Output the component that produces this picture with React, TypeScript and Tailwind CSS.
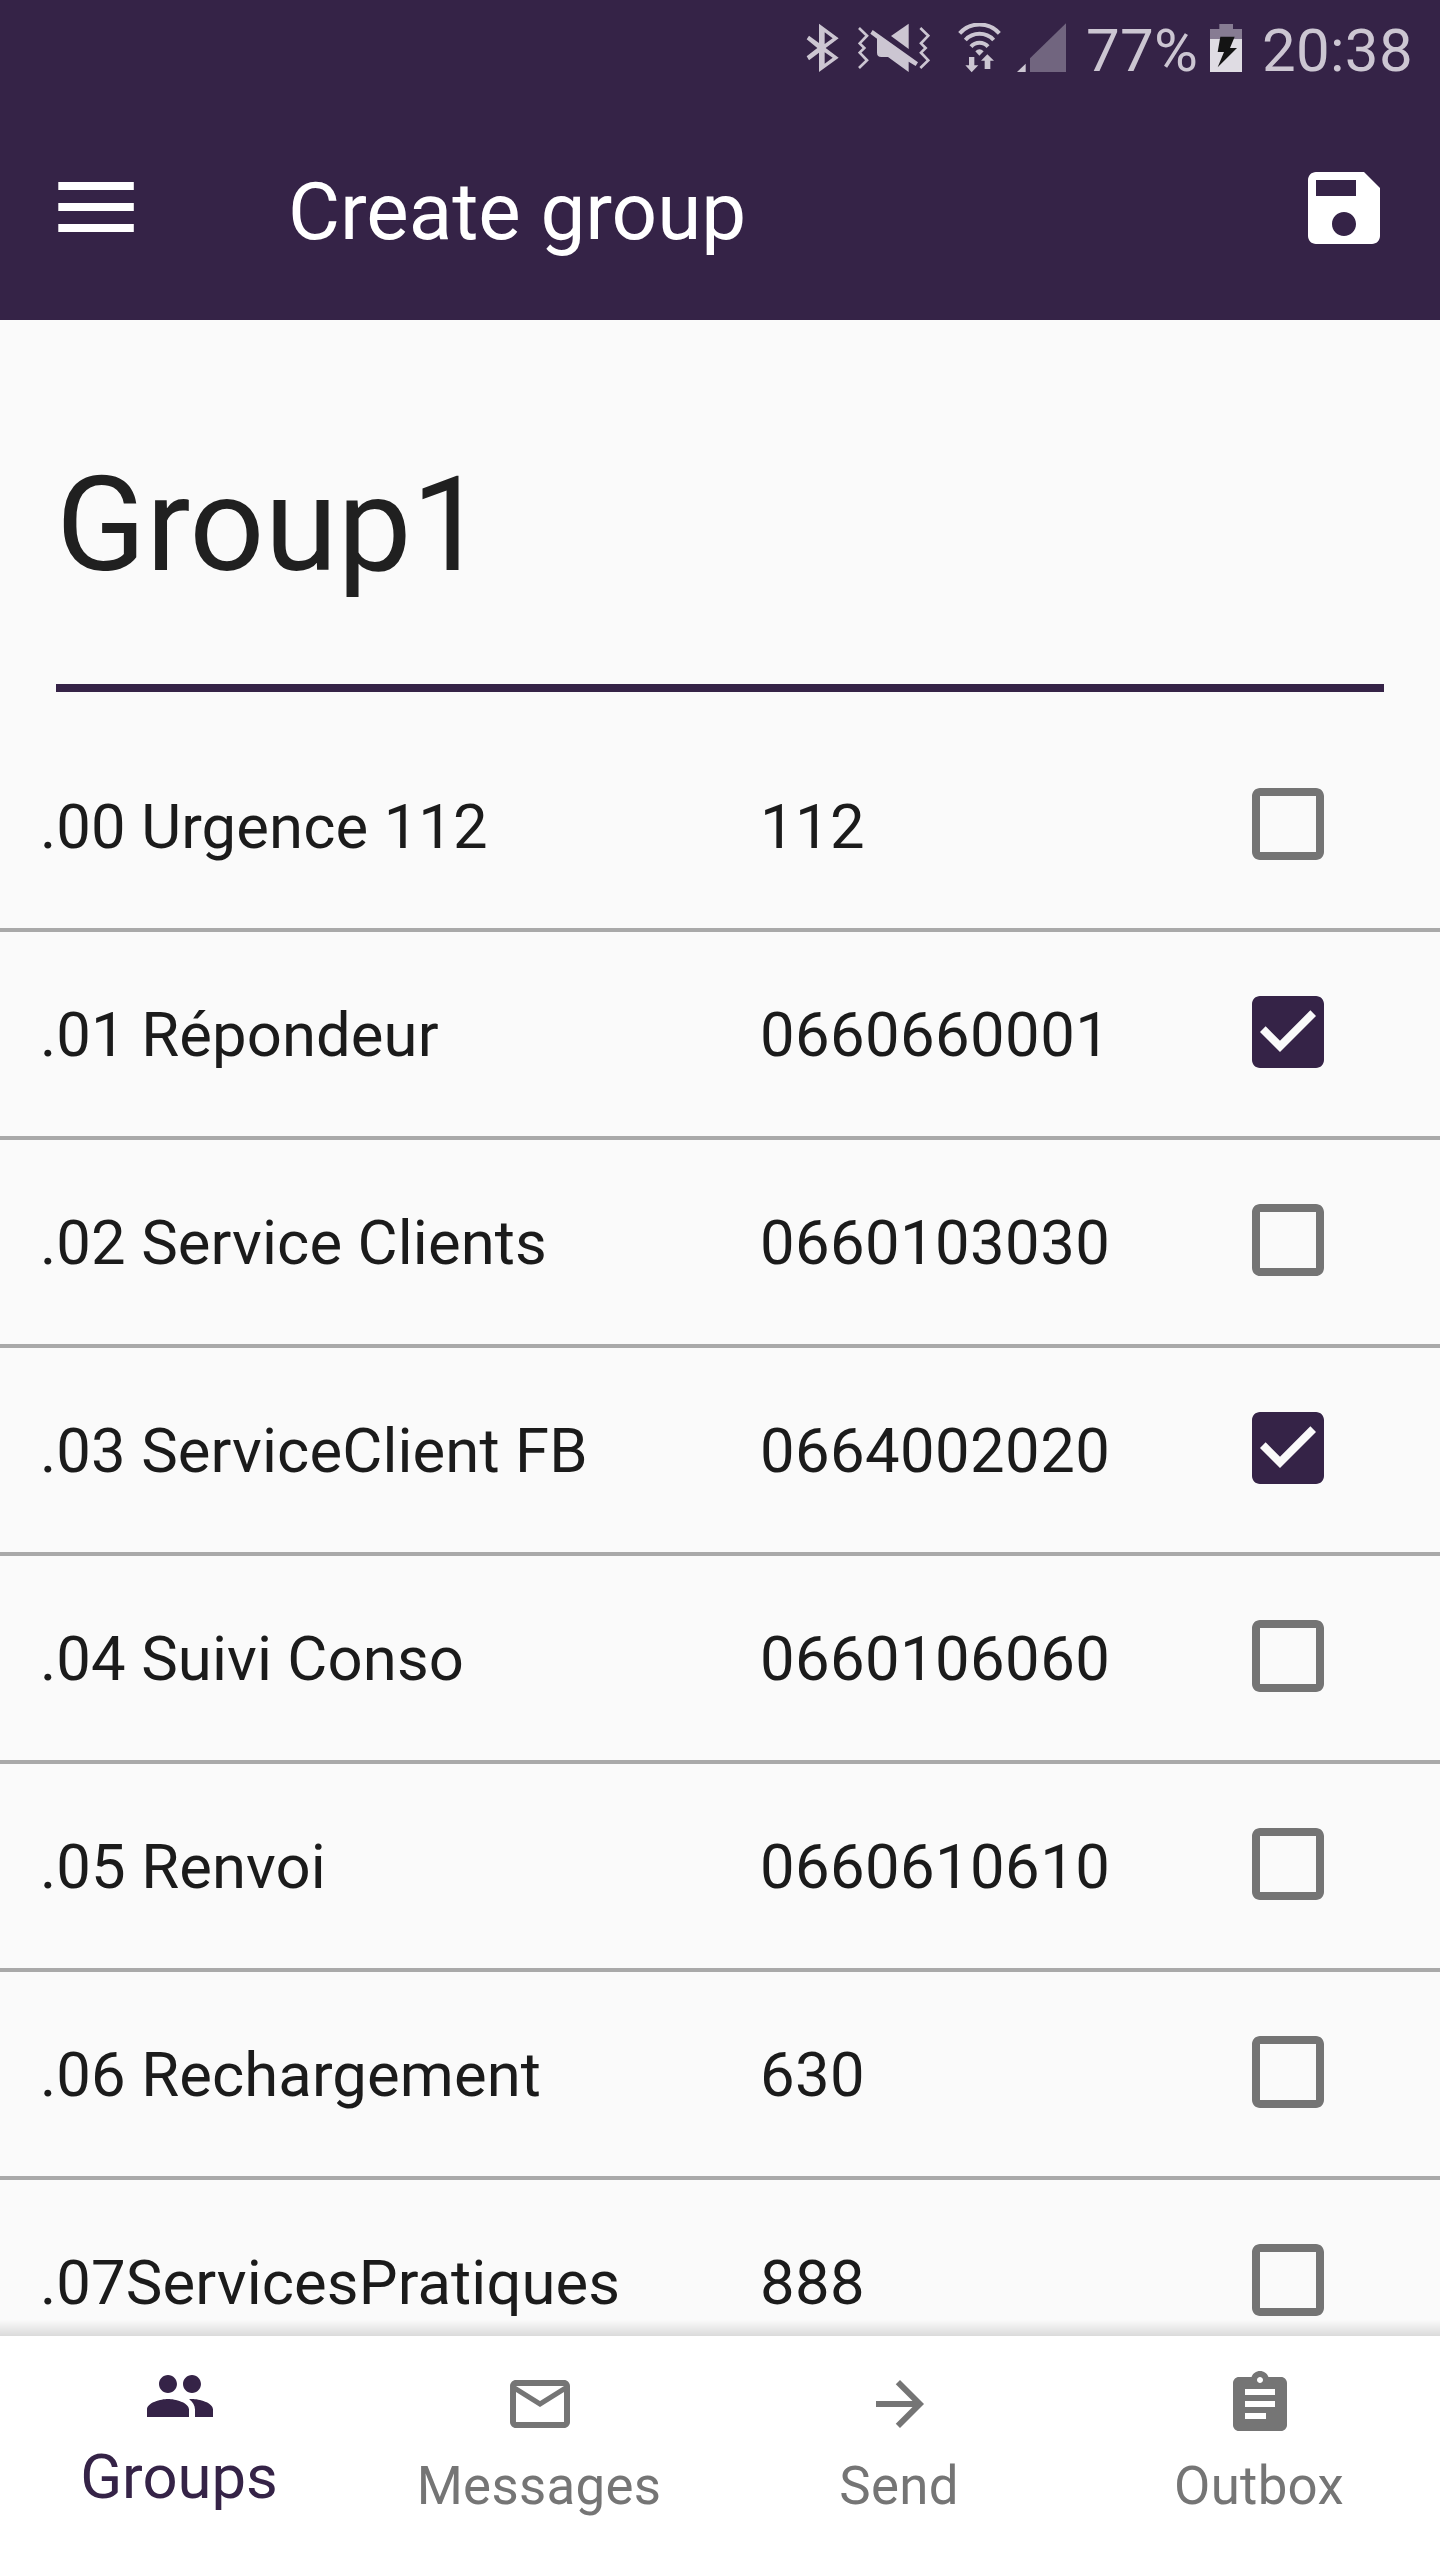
import { useState } from "react";

type Contact = { name: string; phone: string };

const contacts: Contact[] = [
  { name: ".00 Urgence 112", phone: "112" },
  { name: ".01 Répondeur", phone: "0660660001" },
  { name: ".02 Service Clients", phone: "0660103030" },
  { name: ".03 ServiceClient FB", phone: "0664002020" },
  { name: ".04 Suivi Conso", phone: "0660106060" },
  { name: ".05 Renvoi", phone: "0660610610" },
  { name: ".06 Rechargement", phone: "630" },
  { name: ".07ServicesPratiques", phone: "888" },
];

const tabs = [
  {
    label: "Groups",
    path: "M16 11c1.66 0 2.99-1.34 2.99-3S17.66 5 16 5c-1.66 0-3 1.34-3 3s1.34 3 3 3zm-8 0c1.66 0 2.99-1.34 2.99-3S9.66 5 8 5C6.34 5 5 6.34 5 8s1.34 3 3 3zm0 2c-2.33 0-7 1.17-7 3.5V19h14v-2.5c0-2.33-4.67-3.5-7-3.5zm8 0c-.29 0-.62.02-.97.05 1.16.84 1.97 1.97 1.97 3.45V19h6v-2.5c0-2.33-4.67-3.5-7-3.5z",
  },
  {
    label: "Messages",
    path: "M20 4H4c-1.1 0-1.99.9-1.99 2L2 18c0 1.1.9 2 2 2h16c1.1 0 2-.9 2-2V6c0-1.1-.9-2-2-2zm0 14H4V8l8 5 8-5v10zm-8-7L4 6h16l-8 5z",
  },
  {
    label: "Send",
    path: "M12 4l-1.41 1.41L16.17 11H4v2h12.17l-5.58 5.59L12 20l8-8z",
  },
  {
    label: "Outbox",
    path: "M19 3h-4.18C14.4 1.84 13.3 1 12 1c-1.3 0-2.4.84-2.82 2H5c-1.1 0-2 .9-2 2v14c0 1.1.9 2 2 2h14c1.1 0 2-.9 2-2V5c0-1.1-.9-2-2-2zm-7 0c.55 0 1 .45 1 1s-.45 1-1 1-1-.45-1-1 .45-1 1-1zm2 14H7v-2h7v2zm3-4H7v-2h10v2zm0-4H7V7h10v2z",
  },
];

function StatusBar() {
  return (
    <div className="flex h-24 items-center pl-[806px] text-[60px] leading-[71px] tracking-[0.3px] text-[#ccc6d2]">
      <svg className="h-[50px] w-[34px] shrink-0" viewBox="48 69 102 150" fill="currentColor">
        <path
          fillRule="evenodd"
          d="M57 107L87 129V71L146 115L107 144L146 173L87 216V158L57 181L50 169L82 144L50 118ZM104 97V132L128 115ZM104 157V191L128 173Z"
        />
      </svg>
      <svg className="ml-[18px] h-[50px] w-[72px] shrink-0" viewBox="204 69 216 150" fill="currentColor">
        <path d="M356 71V147L303 108Z" />
        <path d="M248 90L384 187L377 198L356 185V216L294 171H274Q261 171 261 158V116L241 101Z" />
        <g fill="none" stroke="currentColor" strokeWidth="8">
          <path d="M207 84L231 107L209 130L223 144L209 158L231 181L207 204" />
          <path d="M391 84L415 107L393 130L407 144L393 158L415 181L391 204" />
        </g>
      </svg>
      <svg className="ml-7 h-[50px] w-[43px] shrink-0" viewBox="504 69 129 150" fill="currentColor">
        <g fill="none" stroke="currentColor" strokeWidth="12">
          <path d="M509 100A80 80 0 0 1 628 100" />
          <path d="M526 120A58 58 0 0 1 611 120" />
          <path d="M543 140A34 34 0 0 1 594 140" />
        </g>
        <path d="M556 154Q568 142 581 154L568 167Z" />
        <path d="M537 171H553V196H565L545 217L526 196H537Z" />
        <path d="M592 163L612 182H601V207H584V182H573Z" />
      </svg>
      <svg className="ml-4 h-[50px] w-[49px] shrink-0" viewBox="681 69 147 150">
        <path d="M681 216L707 191V216Z" fill="currentColor" />
        <path d="M720 216V175L828 70V216Z" fill="#71657f" />
      </svg>
      <span className="mt-[5px] ml-5 w-28 shrink-0">77%</span>
      <svg className="ml-3 h-[50px] w-8 shrink-0" viewBox="390 69 96 150">
        <path d="M390 87H418V72H459V87H486V117H390Z" fill="#877c93" />
        <path d="M390 117H486V216H390Z" fill="#dfdce3" />
        <path d="M421 110H464L450 144H471L413 202L432 156H413Z" fill="#141414" />
      </svg>
      <span className="mt-[5px] ml-5 shrink-0">20:38</span>
    </div>
  );
}

function AppBar() {
  return (
    <div className="flex h-56 items-center pr-12 pl-[58px] text-white">
      <button aria-label="Menu" className="mb-0.5">
        <svg className="h-[50px] w-[76px]" viewBox="0 0 76 50" fill="currentColor">
          <path d="M0.3 0H75.8V8H0.3ZM0.3 21H75.8V29H0.3ZM0.3 42H75.8V50H0.3Z" />
        </svg>
      </button>
      <h1 className="mt-2 ml-[154px] flex-1 text-[80px] leading-[94px] tracking-[-0.05px]">Create group</h1>
      <button aria-label="Save">
        <svg className="size-24" viewBox="0 0 24 24" fill="currentColor">
          <path d="M17 3H5c-1.11 0-2 .9-2 2v14c0 1.1.89 2 2 2h14c1.1 0 2-.9 2-2V7l-4-4zm-5 16c-1.66 0-3-1.34-3-3s1.34-3 3-3 3 1.34 3 3-1.34 3-3 3zm3-10H5V5h10v4z" />
        </svg>
      </button>
    </div>
  );
}

function Checkbox({ checked, onClick }: { checked: boolean; onClick: () => void }) {
  return (
    <button role="checkbox" aria-checked={checked} onClick={onClick} className="mb-1 size-24">
      <svg className="size-24" viewBox="0 0 24 24">
        {checked ? (
          <path
            fill="#352347"
            d="M19 3H5c-1.11 0-2 .9-2 2v14c0 1.1.89 2 2 2h14c1.11 0 2-.9 2-2V5c0-1.1-.89-2-2-2zm-9 14l-5-5 1.41-1.41L10 14.17l7.59-7.59L19 8l-9 9z"
          />
        ) : (
          <path
            fill="#747474"
            d="M19 5v14H5V5h14m0-2H5c-1.1 0-2 .9-2 2v14c0 1.1.9 2 2 2h14c1.1 0 2-.9 2-2V5c0-1.1-.9-2-2-2z"
          />
        )}
      </svg>
    </button>
  );
}

export default function App() {
  const [selected, setSelected] = useState<string[]>(["0660660001", "0664002020"]);
  const toggle = (phone: string) =>
    setSelected((s) => (s.includes(phone) ? s.filter((p) => p !== phone) : [...s, phone]));

  return (
    <div className="flex h-[2560px] w-[1440px] flex-col overflow-hidden bg-[#fafafa] font-['Roboto',sans-serif]">
      <header className="shrink-0 bg-[#352347]">
        <StatusBar />
        <AppBar />
      </header>

      <main className="min-h-0 flex-1 overflow-hidden">
        <div className="mx-14 mb-8 h-[372px] border-b-8 border-[#352347] pt-32 text-[132px] leading-[154px] text-[#202020]">
          Group1
        </div>
        <ul>
          {contacts.map((c) => (
            <li
              key={c.phone}
              className="grid h-52 grid-cols-[720px_480px_96px] items-center border-b-4 border-[#a9a9a9] pl-10 text-[61.6px] leading-[72px] text-[#1b1b1b]"
            >
              <span className="mt-0.5 tracking-[0.1px]">{c.name}</span>
              <span className="mt-0.5 tracking-[0.4px]">{c.phone}</span>
              <Checkbox checked={selected.includes(c.phone)} onClick={() => toggle(c.phone)} />
            </li>
          ))}
        </ul>
      </main>

      <nav className="relative grid h-56 shrink-0 grid-cols-4 bg-white">
        <div className="absolute inset-x-0 -top-4 h-4 bg-linear-to-b from-black/0 to-black/13" />
        {tabs.map((t, i) => (
          <button
            key={t.label}
            className={
              i === 0
                ? "flex flex-col items-center gap-[9px] pt-6 text-[61.6px] leading-[72px] text-[#352347]"
                : "flex flex-col items-center gap-[15px] pt-8 text-[52.8px] leading-[62px] tracking-[0.3px] text-[#757575]"
            }
          >
            <svg className="size-18" viewBox="0 0 24 24" fill="currentColor">
              <path d={t.path} />
            </svg>
            <span className="mr-0.5">{t.label}</span>
          </button>
        ))}
      </nav>
    </div>
  );
}
